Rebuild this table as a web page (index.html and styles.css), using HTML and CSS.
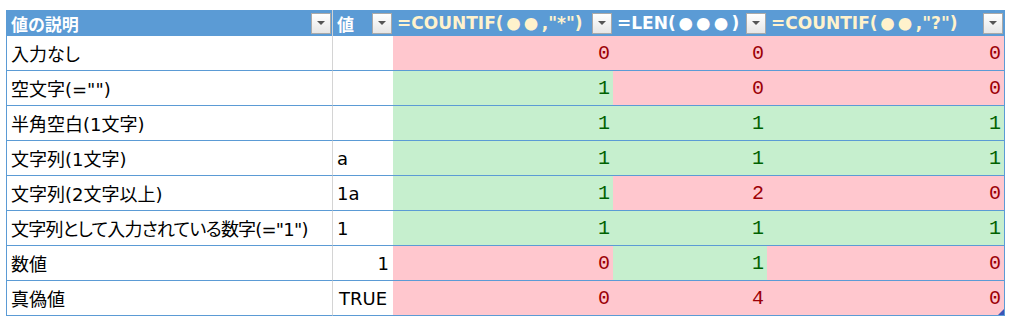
FILE: index.html
```html
<!DOCTYPE html>
<html lang="ja">
<head>
<meta charset="utf-8">
<link rel="stylesheet" href="styles.css">
</head>
<body>
<div class="sheet">
  <div class="table">
    <div class="hd c1"><span class="ht">値の説明</span><span class="fb"></span></div>
    <div class="hd c2"><span class="ht">値</span><span class="fb"></span></div>
    <div class="hd"><span class="ht cream">=COUNTIF(<span class="dots">●●</span>,"*")</span><span class="fb"></span></div>
    <div class="hd"><span class="ht">=LEN(<span class="dots">●●●</span>)</span><span class="fb"></span></div>
    <div class="hd"><span class="ht cream">=COUNTIF(<span class="dots">●●</span>,"?")</span><span class="fb"></span></div>

    <div class="cell c1">入力なし</div>
    <div class="cell c2"></div>
    <div class="cell num ng">0</div>
    <div class="cell num ng">0</div>
    <div class="cell num ng">0</div>

    <div class="cell c1">空文字(="")</div>
    <div class="cell c2"></div>
    <div class="cell num ok">1</div>
    <div class="cell num ng">0</div>
    <div class="cell num ng">0</div>

    <div class="cell c1">半角空白(1文字)</div>
    <div class="cell c2"></div>
    <div class="cell num ok">1</div>
    <div class="cell num ok">1</div>
    <div class="cell num ok">1</div>

    <div class="cell c1">文字列(1文字)</div>
    <div class="cell c2">a</div>
    <div class="cell num ok">1</div>
    <div class="cell num ok">1</div>
    <div class="cell num ok">1</div>

    <div class="cell c1">文字列(2文字以上)</div>
    <div class="cell c2">1a</div>
    <div class="cell num ok">1</div>
    <div class="cell num ng">2</div>
    <div class="cell num ng">0</div>

    <div class="cell c1 tight">文字列として入力されている数字(="1")</div>
    <div class="cell c2">1</div>
    <div class="cell num ok">1</div>
    <div class="cell num ok">1</div>
    <div class="cell num ok">1</div>

    <div class="cell c1">数値</div>
    <div class="cell c2 right">1</div>
    <div class="cell num ng">0</div>
    <div class="cell num ok">1</div>
    <div class="cell num ng">0</div>

    <div class="cell c1">真偽値</div>
    <div class="cell c2 center">TRUE</div>
    <div class="cell num ng">0</div>
    <div class="cell num ng">4</div>
    <div class="cell num ng last">0<span class="handle"></span></div>
  </div>
</div>
</body>
</html>
```
FILE: styles.css
```css
html, body {
  margin: 0;
  padding: 0;
  background: #ffffff;
}

.sheet {
  padding: 10px 0 0 6px;
}

.table {
  display: grid;
  grid-template-columns: 326px 60px 220px 154px 237px;
  width: max-content;
  border-left: 1px solid #5b9bd5;
  border-right: 1px solid #5b9bd5;
  font-family: "DejaVu Sans", "Noto Sans CJK JP", sans-serif;
  font-size: 18px;
  font-feature-settings: "palt" 1;
  color: #000;
}

.hd {
  height: 26px;
  background: #5b9bd5;
  display: flex;
  align-items: center;
  justify-content: space-between;
  padding-left: 4px;
  box-sizing: border-box;
}

.ht {
  color: #ffffff;
  font-weight: bold;
  font-size: 17px;
  white-space: nowrap;
  display: flex;
  align-items: center;
}

.ht.cream {
  color: #fff2cc;
}

.dots {
  font-family: "Noto Sans CJK JP", sans-serif;
  font-feature-settings: normal;
  font-size: 14px;
  letter-spacing: 3.6px;
  margin-left: 3px;
}

.fb {
  width: 20px;
  height: 21px;
  margin-right: 1px;
  box-sizing: border-box;
  border: 1px solid #a9a9a9;
  background: linear-gradient(#ffffff, #e6e6e6);
  display: flex;
  align-items: center;
  justify-content: center;
  flex: none;
}

.fb::after {
  content: "";
  width: 0;
  height: 0;
  border-left: 4px solid transparent;
  border-right: 4px solid transparent;
  border-top: 4px solid #555555;
}

.cell {
  height: 35px;
  box-sizing: border-box;
  border-bottom: 1px solid #5b9bd5;
  display: flex;
  align-items: center;
  padding: 0 4px;
  white-space: nowrap;
}

.c1 {
  border-right: 1px solid #d4d4d4;
}

.tight {
  letter-spacing: -0.8px;
}

.c2.right {
  justify-content: flex-end;
  padding-right: 4px;
}

.c2.center {
  justify-content: center;
}

.num {
  justify-content: flex-end;
  padding-right: 3px;
  font-family: "Liberation Mono", monospace;
  font-size: 20px;
}

.ok {
  background: #c6efce;
  color: #006100;
}

.ng {
  background: #ffc7ce;
  color: #9c0006;
}

.last {
  position: relative;
}

.handle {
  position: absolute;
  right: 0;
  bottom: 0;
  width: 6px;
  height: 6px;
  background: #3a55b8;
  clip-path: polygon(100% 0, 100% 100%, 0 100%);
}
```
